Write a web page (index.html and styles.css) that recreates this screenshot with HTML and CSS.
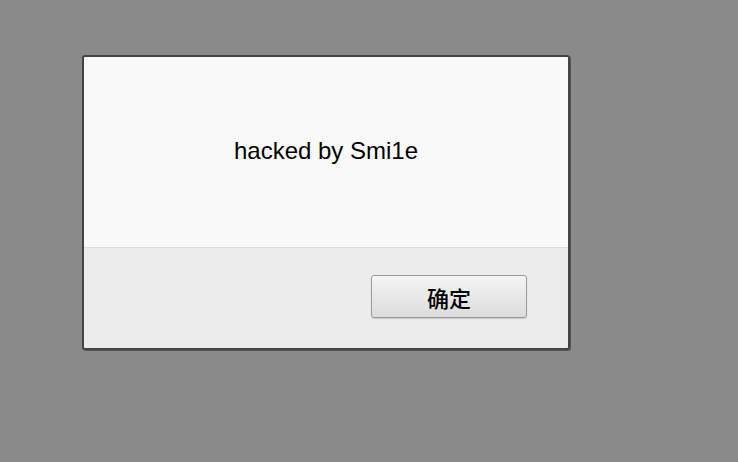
FILE: index.html
```html
<!DOCTYPE html>
<html>
<head>
<meta charset="utf-8">
<link rel="stylesheet" href="styles.css">
</head>
<body>
<div class="dialog">
  <div class="message">hacked by Smi1e</div>
  <div class="actions">
    <button class="ok">确定</button>
  </div>
</div>
</body>
</html>
```
FILE: styles.css
```css
html, body {
  margin: 0;
  padding: 0;
  background: #8a8a8a;
  width: 738px;
  height: 462px;
  overflow: hidden;
}
body {
  padding: 55px 0 0 82px;
  box-sizing: border-box;
  font-family: "Liberation Sans", Arial, "Noto Sans CJK SC", sans-serif;
}
.dialog {
  width: 484px;
  height: 291px;
  border: 2px solid #444;
  border-radius: 3px;
  box-shadow: 1px 1px 0 #555;
  display: flex;
  flex-direction: column;
  overflow: hidden;
}
.message {
  height: 191px;
  flex: none;
  background: #f9f9f9;
  border-bottom: 1px solid #dcdcdc;
  display: flex;
  align-items: center;
  justify-content: center;
  font-size: 24px;
  color: #000;
  padding-bottom: 2px;
  box-sizing: border-box;
}
.actions {
  flex: 1;
  background: #ececec;
  display: flex;
  justify-content: flex-end;
  align-items: flex-start;
  padding: 27px 41px 0 0;
}
.ok {
  width: 156px;
  height: 43px;
  border: 1px solid #999;
  border-radius: 3px;
  background: linear-gradient(#f4f4f4, #dcdcdc);
  font-family: "Noto Sans CJK SC", sans-serif;
  font-size: 22px;
  font-weight: 500;
  color: #000;
  padding: 0;
  box-shadow: 0 1px 1px rgba(0,0,0,0.15);
}
```
